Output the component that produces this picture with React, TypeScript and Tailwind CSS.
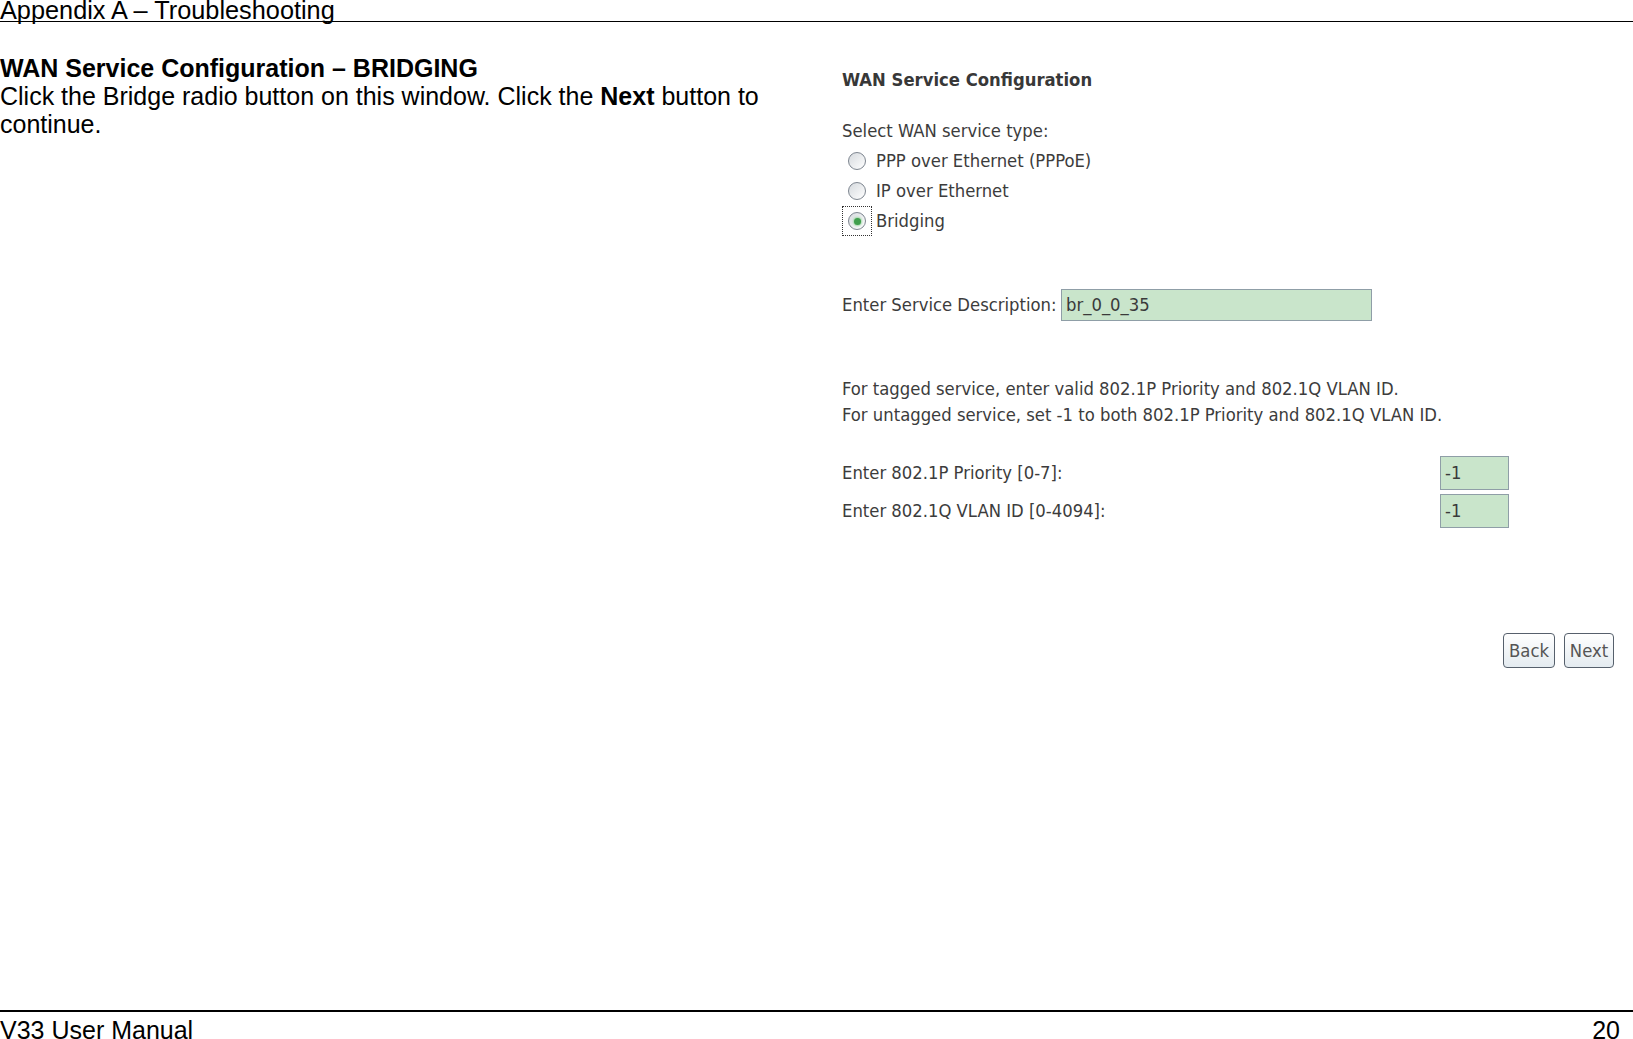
import React from "react";

const doc = { fontFamily: '"Liberation Sans", Arial, sans-serif' };
const ui = { fontFamily: '"DejaVu Sans Condensed", "DejaVu Sans", Tahoma, sans-serif' };

function Radio({ checked, focused }: { checked?: boolean; focused?: boolean }) {
  return (
    <div
      className={
        "flex h-[30px] w-[30px] items-center justify-center " +
        (focused ? "border border-dotted border-[#333]" : "border border-transparent")
      }
    >
      <div className="flex h-[18px] w-[18px] items-center justify-center rounded-full border border-[#7d858f] bg-gradient-to-br from-[#d6dade] to-white">
        {checked && <div className="h-[7px] w-[7px] rounded-full bg-[#3f9e4c] shadow-[0_0_2px_1px_#9fd6a6]" />}
      </div>
    </div>
  );
}

function Field({ value, className }: { value: string; className: string }) {
  return (
    <div className={"flex items-center border border-[#8f9ea7] bg-[#c9e5cb] pl-[4px] text-[#3a3a3a] " + className}>
      {value}
    </div>
  );
}

function Button({ label, className }: { label: string; className: string }) {
  return (
    <div
      className={
        "flex h-[35px] items-center justify-center rounded-[4px] border border-[#56606c] bg-gradient-to-b from-white to-[#e4ebf0] text-[#555] " +
        className
      }
    >
      {label}
    </div>
  );
}

function WanPanel() {
  return (
    <div className="flex flex-col pr-[19px] text-[18.3px] text-[#3c3c3c]" style={ui}>
      <div className="mt-[43px] flex h-[30px] items-center font-bold text-[#383838]">WAN Service Configuration</div>

      <div className="mt-[21px] flex h-[30px] items-center">Select WAN service type:</div>
      <div className="flex h-[30px] items-center">
        <Radio />
        <span className="ml-[4px]">PPP over Ethernet (PPPoE)</span>
      </div>
      <div className="flex h-[30px] items-center">
        <Radio />
        <span className="ml-[4px]">IP over Ethernet</span>
      </div>
      <div className="flex h-[30px] items-center">
        <Radio checked focused />
        <span className="ml-[4px]">Bridging</span>
      </div>

      <div className="mt-[53px] flex h-[32px] items-center">
        <span className="w-[219px] shrink-0">Enter Service Description:</span>
        <Field value="br_0_0_35" className="h-[32px] w-[311px]" />
      </div>

      <div className="mt-[54px] flex h-[27px] items-center">
        For tagged service, enter valid 802.1P Priority and 802.1Q VLAN ID.
      </div>
      <div className="flex h-[26px] items-center">
        For untagged service, set -1 to both 802.1P Priority and 802.1Q VLAN ID.
      </div>

      <div className="mt-[28px] flex h-[34px] items-center pr-[105px]">
        <span>Enter 802.1P Priority [0-7]:</span>
        <Field value="-1" className="ml-auto h-[34px] w-[69px]" />
      </div>
      <div className="mt-[4px] flex h-[34px] items-center pr-[105px]">
        <span>Enter 802.1Q VLAN ID [0-4094]:</span>
        <Field value="-1" className="ml-auto h-[34px] w-[69px]" />
      </div>

      <div className="mt-[105px] flex justify-end gap-[9px]">
        <Button label="Back" className="w-[52px]" />
        <Button label="Next" className="w-[50px]" />
      </div>
    </div>
  );
}

export default function App() {
  return (
    <div className="flex h-[1039px] w-[1633px] flex-col overflow-hidden bg-white text-[25px] text-black" style={doc}>
      <div className="h-[22px] border-b border-black">
        <div className="text-[25.3px] leading-[21px]">Appendix A – Troubleshooting</div>
      </div>

      <div className="flex">
        <div className="w-[842px] shrink-0 pr-[40px] pt-[32px] leading-[28px]">
          <div className="font-bold">WAN Service Configuration – BRIDGING</div>
          <div>
            Click the Bridge radio button on this window. Click the <span className="font-bold">Next</span> button to
            continue.
          </div>
        </div>
        <div className="flex-1">
          <WanPanel />
        </div>
      </div>

      <div className="mt-auto h-[29px] border-t-2 border-black">
        <div className="flex justify-between pr-[13px] pt-[6px] leading-[25px]">
          <span>V33 User Manual</span>
          <span>20</span>
        </div>
      </div>
    </div>
  );
}
